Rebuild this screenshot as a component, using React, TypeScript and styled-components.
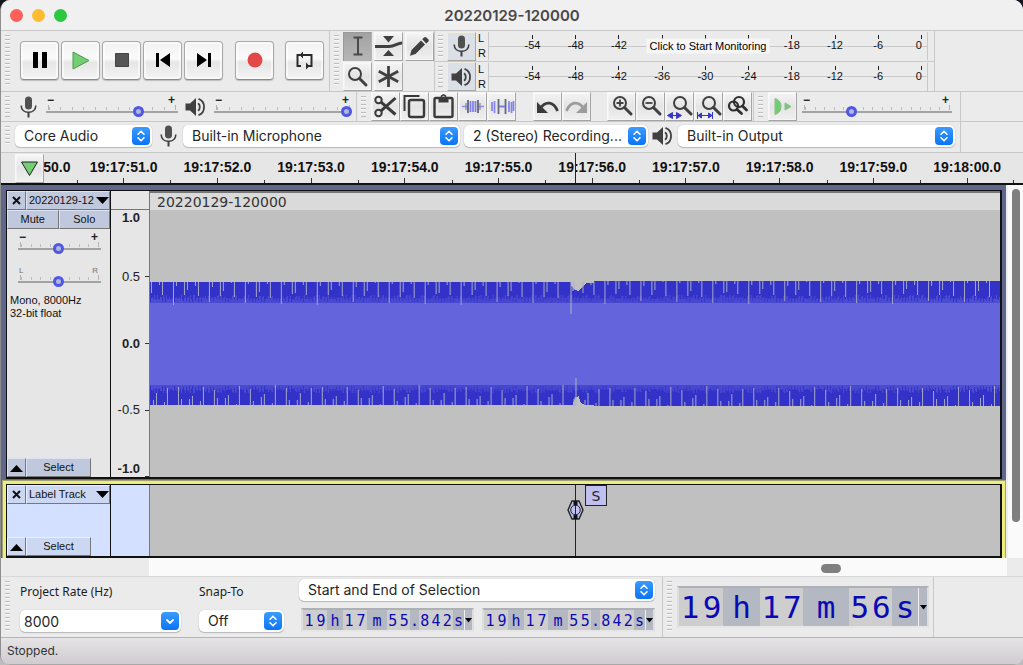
import React from "react";
import styled, { createGlobalStyle, css } from "styled-components";

const UI = `Inter, "Liberation Sans", sans-serif`;
const HELV = `"Liberation Sans", Arial, sans-serif`;
const LUCIDA = `"Noto Sans", "DejaVu Sans", sans-serif`;
const LINE = "#c8c8c8";
const INK = "#404040";

const Global = createGlobalStyle`
  *, *::before, *::after { box-sizing: border-box; }
  html, body { margin: 0; padding: 0; min-height: 100%; }
  body { background: linear-gradient(#16161e 0 30px, #bdbdbd 30px); font-family: ${UI}; color: #262626; }
  button, input, select { font: inherit; color: inherit; margin: 0; padding: 0; border: 0; background: none; border-radius: 0; }
  svg { display: block; flex: none; }
`;

/* ---------- window frame ---------- */

const Window = styled.div`
  min-height: 100vh;
  display: flex;
  flex-direction: column;
  background: #ebebeb;
  border-left: 1px solid #8e8e8e;
  border-radius: 10px;
  overflow: hidden;
`;

const TitleBar = styled.header`
  position: relative;
  height: 31px;
  display: flex;
  align-items: center;
  justify-content: center;
  background: #f0f0f0;
  border-bottom: 1px solid ${LINE};
`;

const Lights = styled.div`
  position: absolute;
  left: 9px;
  display: flex;
  gap: 9px;
`;

const Light = styled.button<{ $c: string }>`
  && {
    width: 13px;
    height: 13px;
    border-radius: 50%;
    background: ${(p) => p.$c};
  }
`;

const Title = styled.h1`
  margin: 0;
  font-size: 15px;
  font-weight: 600;
  color: #484848;
`;

const ToolRow = styled.div<{ $h: number }>`
  display: flex;
  height: ${(p) => p.$h}px;
  border-bottom: 1px solid ${LINE};
`;

const Bar = styled.div<{ $w: number; $gap?: number; $lift?: boolean }>`
  display: flex;
  align-items: center;
  gap: ${(p) => p.$gap ?? 0}px;
  flex: 0 1 ${(p) => p.$w}px;
  padding-left: 4px;
  padding-bottom: ${(p) => (p.$lift ? 2 : 0)}px;
  border-right: 1px solid ${LINE};
`;

const Grip = styled.span`
  flex: none;
  align-self: stretch;
  width: 5px;
  margin: 4px 0;
  background: repeating-linear-gradient(#bcbcbc 0 1px, #f8f8f8 1px 2px, transparent 2px 4px);
`;

const Gap = styled.span<{ $w: number }>`
  flex: none;
  width: ${(p) => p.$w}px;
`;

/* ---------- buttons ---------- */

const TransportButton = styled.button`
  flex: none;
  display: grid;
  place-items: center;
  width: 39px;
  height: 39px;
  border: 1px solid #a8a8a8;
  border-bottom-color: #8a8a8a;
  border-radius: 4px;
  background: linear-gradient(#f2f2f2, #fafafa 45%, #e6e6e6 55%, #f4f4f4);
  box-shadow: inset 0 0 0 2px #ffffff88, 0 1px 1px #0003;
`;

const ToolButton = styled.button<{ $down?: boolean; $tint?: boolean }>`
  flex: none;
  display: grid;
  place-items: center;
  width: 29px;
  height: 29px;
  border: 1px solid #f8f8f8;
  border-right-color: #a4a4a4;
  border-bottom-color: #a4a4a4;
  background: linear-gradient(#f4f4f4, #e4e4e4 50%, #f0f0f0);
  box-shadow: inset 0 0 0 1px #ffffff66;
  ${(p) =>
    p.$down &&
    css`
      border-color: #9a9a9a #b4b4b4 #b4b4b4 #9a9a9a;
      background: linear-gradient(#a2a2a2, #b6b6b6);
      box-shadow: none;
    `}
  ${(p) =>
    p.$tint &&
    css`
      border-color: #f2eedf #a8a8a8 #a8a8a8 #f2eedf;
      background: #dbdfe6;
      box-shadow: none;
    `}
`;

const ToolGrid = styled.div`
  display: grid;
  grid-template-columns: repeat(3, 29px);
  gap: 1px 2px;
`;

/* ---------- sliders ---------- */

const SliderBox = styled.label<{ $w: number }>`
  flex: none;
  width: ${(p) => p.$w}px;
  display: flex;
  flex-direction: column;
`;

const Ends = styled.span<{ $small?: boolean }>`
  display: flex;
  justify-content: space-between;
  height: 9px;
  padding: 0 3px 0 1px;
  font: ${(p) => (p.$small ? "8px" : "bold 12px")} / 9px ${HELV};
  color: ${(p) => (p.$small ? "#707070" : "#222")};
`;

const Ticks = styled.span<{ $n: number }>`
  height: 5px;
  margin: 0 2px;
  border: solid #b4b4b4;
  border-width: 0 1px;
  background: repeating-linear-gradient(to right, #bcbcbc 0 1px, transparent 1px calc(100% / ${(p) => p.$n})) bottom / 100% 3px no-repeat;
`;

const Range = styled.input`
  && {
    appearance: none;
    display: block;
    width: 100%;
    height: 11px;
    margin-top: -4px;
    background: linear-gradient(#a2a2a2, #a2a2a2) center / 100% 2px no-repeat;
  }
  &::-webkit-slider-thumb {
    appearance: none;
    width: 11px;
    height: 11px;
    border: 3px solid #4f57e6;
    border-radius: 50%;
    background: #b4b4dc;
  }
`;

function Slider(p: { label: string; w: number; n: number; value: number; ends?: [string, string] }) {
  const ends = p.ends ?? ["−", "+"];
  return (
    <SliderBox $w={p.w}>
      <Ends $small={!!p.ends} aria-hidden="true">
        <span>{ends[0]}</span>
        <span>{ends[1]}</span>
      </Ends>
      <Ticks $n={p.n} />
      <Range type="range" min={0} max={100} defaultValue={p.value} aria-label={p.label} />
    </SliderBox>
  );
}

/* ---------- drop-downs ---------- */

const Field = styled.span<{ $w?: number }>`
  position: relative;
  flex: none;
  width: ${(p) => (p.$w ? `${p.$w}px` : "100%")};
  display: block;
  height: 22px;
  border-radius: 5px;
  background: #fff;
  box-shadow: 0 1px 1px #0003, 0 0 1px #0004;
`;

const Select = styled.select`
  && {
    appearance: none;
    display: block;
    width: 100%;
    height: 22px;
    padding: 0 24px 0 9px;
    font-size: 14px;
    line-height: 20px;
    text-overflow: ellipsis;
  }
`;

const Text = styled.input`
  && {
    display: block;
    width: 100%;
    height: 22px;
    padding: 1px 24px 0 4px;
    font-size: 14px;
  }
`;

const Knob = styled.span`
  position: absolute;
  right: 2px;
  top: 2px;
  width: 18px;
  height: 18px;
  border-radius: 4px;
  background: linear-gradient(#3b9bff, #0a74f5);
  pointer-events: none;
`;

function UpDown() {
  return (
    <Knob>
      <svg width="18" height="18" viewBox="0 0 18 18" fill="none" stroke="#fff" strokeWidth="1.6" strokeLinecap="round" strokeLinejoin="round">
        <path d="M6 7.2 9 4.2l3 3M6 10.8l3 3 3-3" />
      </svg>
    </Knob>
  );
}

function Dropdown(p: { label: string; w: number; value: string }) {
  return (
    <Field $w={p.w}>
      <Select aria-label={p.label}>
        <option>{p.value}</option>
      </Select>
      <UpDown />
    </Field>
  );
}

/* ---------- icons ---------- */

const Mic = () => (
  <svg width="17" height="22" viewBox="0 0 17 22" fill="none" stroke={INK}>
    <rect x="5" y="0.5" width="7" height="13" rx="3.5" fill="#505050" stroke="none" />
    <path d="M1.200 9.500c0 4.200 3 6.800 7.300 6.800s7.300-2.600 7.300-6.800" strokeWidth="1.600" />
    <path d="M8.500 16v5.500" strokeWidth="2" />
  </svg>
);

const Speaker = () => (
  <svg width="21" height="20" viewBox="0 0 21 20" fill="none" stroke={INK}>
    <path d="M0.500 6.500h4.500L11 1v18l-6-5.500H0.500z" fill={INK} stroke="none" />
    <path d="M13 6.200c2.400 1.600 2.400 6 0 7.600" strokeWidth="1.800" />
    <path d="M13.500 1.800c7.400 2.600 7.400 13.800 0 16.400" strokeWidth="1.800" />
  </svg>
);

const Glass = ({ children, x = 10, y = 9 }: { children?: React.ReactNode; x?: number; y?: number }) => (
  <svg width="27" height="27" viewBox="0 0 27 27" fill="none" stroke={INK}>
    <circle cx={x} cy={y} r="6" strokeWidth="2" />
    <path d={`M${x + 4.5} ${y + 4.5}l6.500 6.500`} strokeWidth="3" strokeLinecap="round" />
    {children}
  </svg>
);

const IBeam = () => (
  <svg width="12" height="20" viewBox="0 0 12 20" fill="none" stroke="#4a4a4a" strokeWidth="2">
    <path d="M1.500 1.500h9M1.500 18.500h9M6 1.500v17" />
  </svg>
);

const Envelope = () => (
  <svg width="27" height="27" viewBox="0 0 27 27" fill={INK}>
    <path d="M8 3h11l-5.500 6.500zM8 23h11l-5.500-6z" />
    <path d="M0 13.500h14c6 0 8-3.500 13-3.500" fill="none" stroke={INK} strokeWidth="2.800" />
  </svg>
);

const Pencil = () => (
  <svg width="21" height="21" viewBox="0 0 21 21" fill={INK}>
    <path d="M2.500 14 12 4.500l4 4L6.500 18l-5.500 1.800zM13.200 3.300 15 1.500c.8-.8 1.600-.8 2.400 0l1.800 1.800c.8.8.8 1.600 0 2.400L17.300 7.400z" />
  </svg>
);

const Star = () => (
  <svg width="23" height="23" viewBox="0 0 23 23" stroke={INK} strokeWidth="2.800">
    <path d="M11.500 1v21M1.800 6.200l19.400 10.600M1.800 16.800 21.200 6.200" />
  </svg>
);

const Scissors = () => (
  <svg width="25" height="25" viewBox="0 0 25 25" fill="none" stroke="#3a3a3a">
    <circle cx="5.500" cy="6" r="3.200" strokeWidth="2" />
    <circle cx="5.500" cy="19" r="3.200" strokeWidth="2" />
    <path d="M8 8.200 22.500 20.500M8 16.800 22.500 4" strokeWidth="3" />
  </svg>
);

const Copy = () => (
  <svg width="25" height="25" viewBox="0 0 25 25" fill="none" stroke="#3a3a3a" strokeWidth="2.400">
    <path d="M2.500 17V2h15" strokeWidth="2" />
    <rect x="7" y="6" width="15" height="17" rx="2" />
  </svg>
);

const Paste = () => (
  <svg width="25" height="25" viewBox="0 0 25 25" fill="none" stroke="#3a3a3a" strokeWidth="2.400">
    <rect x="3.500" y="4" width="18" height="19" rx="1.500" />
    <path d="M7.500 3h10v5.500h-10z" fill="#3a3a3a" stroke="none" />
    <circle cx="12.500" cy="3" r="2" strokeWidth="1.600" />
  </svg>
);

const Trim = () => (
  <svg width="27" height="27" viewBox="0 0 27 27" fill="none">
    <path d="M3 13.500h6M19 13.500h6" stroke="#8d8df0" strokeWidth="1.700" />
    <path d="M11.500 8v11M14 8v11M16.500 8v11" stroke="#7d7dec" strokeWidth="1.700" />
    <path d="M9 7v13M19 7v13" stroke="#66667c" strokeWidth="1.800" />
    <path d="M7 10v7M21 10v7" stroke="#9090b0" strokeWidth="1.400" />
  </svg>
);

const Silence = () => (
  <svg width="27" height="27" viewBox="0 0 27 27" fill="none">
    <path d="M4 9v9M6.500 8v12M21 8v11M23.500 9v11M25.500 8v10" stroke="#8484ec" strokeWidth="1.700" />
    <path d="M10.500 6v15M17.500 6v15" stroke="#66667c" strokeWidth="1.800" />
    <path d="M11 13.500h6" stroke="#7d7dec" strokeWidth="2" />
  </svg>
);

const Undo = ({ flip, color }: { flip?: boolean; color: string }) => (
  <svg width="25" height="20" viewBox="0 0 25 20" fill="none" stroke={color}>
    <g transform={flip ? "translate(25 0) scale(-1 1)" : undefined}>
      <path d="M5 11.500C11 3 19 5 22.500 14" strokeWidth="2.800" />
      <path d="M2 5v11h11z" fill={color} stroke="none" />
    </g>
  </svg>
);

const Loop = () => (
  <svg width="21" height="21" viewBox="0 0 21 21" fill="none" stroke="#2a2a2a" strokeWidth="2">
    <path d="M6.500 5H3.500v11H7" />
    <path d="M9 5h8.500v7M13 16h4.500V9" />
    <path d="M9 1.500v7L5.500 5zM12 12.500v7l3.500-3.500z" fill="#2a2a2a" stroke="none" />
  </svg>
);

const EditIcons: [string, React.ReactNode][] = [
  ["Cut", <Scissors />],
  ["Copy", <Copy />],
  ["Paste", <Paste />],
  ["Trim audio", <Trim />],
  ["Silence audio", <Silence />],
];

const ZoomIcons: [string, React.ReactNode][] = [
  ["Zoom in", <Glass x={12} y={10}><path d="M8.500 10h7M12 6.500v7" strokeWidth="1.800" /></Glass>],
  ["Zoom out", <Glass x={12} y={10}><path d="M8.500 10h7" strokeWidth="1.800" /></Glass>],
  ["Fit selection", <Glass x={14} y={10}><path d="M2 22.500h13M6.500 19.500v6l-5-3zM10.500 19.500v6l5-3z" stroke="#3636c4" fill="#3636c4" strokeWidth="1" /></Glass>],
  ["Fit project", <Glass x={14} y={10}><path d="M2.500 19v7M17.500 19v7M3 22.500h14M6.500 20v5l-3.500-2.500zM13.500 20v5l3.500-2.500z" stroke="#3636c4" fill="#3636c4" strokeWidth="1" /></Glass>],
  ["Zoom toggle", (
    <svg width="27" height="27" viewBox="0 0 27 27" fill="none" stroke="#2e2e2e" strokeWidth="2.200" strokeLinecap="round">
      <circle cx="15" cy="9" r="5" />
      <circle cx="9.500" cy="13" r="4.500" />
      <path d="m18.500 13 4 4M13 16.500l4.500 4" strokeWidth="2.800" />
    </svg>
  )],
];

/* ---------- meters ---------- */

const Meters = styled(Bar)`
  flex-direction: column;
  align-items: stretch;
  padding: 0;
`;

const MeterRow = styled.div`
  display: flex;
  align-items: center;
  height: 30px;
  padding: 0 6px 0 3px;
  & + & { border-top: 1px solid ${LINE}; }
`;

const Channels = styled.span`
  display: flex;
  flex-direction: column;
  width: 10px;
  margin-left: 2px;
  font: 11px / 15px ${HELV};
  color: #111;
`;

const Meter = styled.div`
  position: relative;
  flex: 1;
  height: 28px;
  padding: 3px 5px 0 43px;
  border: solid ${LINE};
  border-width: 0 1px 0 1px;
  background: linear-gradient(${LINE}, ${LINE}) center / 100% 1px no-repeat;
`;

const Scale = styled.div`
  display: flex;
  justify-content: space-between;
`;

const Mark = styled.span`
  display: flex;
  flex-direction: column;
  align-items: center;
  width: 1px;
  font: 11px / 12px ${HELV};
  color: #111;
  white-space: nowrap;
  &::before { content: ""; width: 1px; height: 4px; background: #222; }
  &:last-child { align-items: flex-end; }
`;

const Monitor = styled.button`
  && {
    position: absolute;
    left: 50%;
    top: 50%;
    transform: translate(-50%, -50%);
    height: 15px;
    padding: 0 3px;
    background: #f6f6f6;
    font: 11px / 15px ${HELV};
    color: #000;
    white-space: nowrap;
  }
`;

const DB = ["-54", "-48", "-42", "-36", "-30", "-24", "-18", "-12", "-6", "0"];

function MeterLine(p: { label: string; icon: React.ReactNode; monitor?: boolean }) {
  return (
    <MeterRow>
      <Grip />
      <Gap $w={4} />
      <ToolButton $tint aria-label={p.label}>{p.icon}</ToolButton>
      <Channels><span>L</span><span>R</span></Channels>
      <Meter>
        <Scale>
          {DB.map((d, i) => (
            <Mark key={d}>{p.monitor && i > 2 && i < 6 ? null : d}</Mark>
          ))}
        </Scale>
        {p.monitor && <Monitor>Click to Start Monitoring</Monitor>}
      </Meter>
    </MeterRow>
  );
}

/* ---------- timeline ---------- */

const Timeline = styled.div`
  position: relative;
  display: flex;
  height: 32px;
  overflow: hidden;
  background: #e6e6e6;
  border-bottom: 2px solid #111;
`;

const Hours = styled.div`
  flex: 1;
  display: grid;
  grid-template-columns: repeat(11, 1fr);
  margin: 0 9px 0 -18px;
  background: linear-gradient(#333, #333) right bottom / 1px 3px no-repeat;
`;

const Hour = styled.span`
  min-width: 0;
  padding-top: 5px;
  text-align: center;
  white-space: nowrap;
  font: bold 14px / 18px ${HELV};
  color: #111;
  background:
    linear-gradient(#333, #333) left bottom / 1px 3px no-repeat,
    linear-gradient(#333, #333) center bottom / 1px 5px no-repeat;
  &:first-child { padding-left: 54px; }
`;

const PinButton = styled(ToolButton)`
  position: absolute;
  left: 14px;
  top: 1px;
`;

const PlayCursor = styled.span`
  position: absolute;
  left: 56.2%;
  top: 0;
  bottom: 0;
  width: 1px;
  background: #222;
`;

/* ---------- tracks ---------- */

const TrackArea = styled.main`
  flex: 1;
  display: flex;
  background: #fafafa;
`;

const Tracks = styled.div`
  flex: 1;
  display: flex;
  flex-direction: column;
  min-width: 0;
  background: #5f678a;
`;

const Track = styled.section<{ $focus?: boolean }>`
  display: flex;
  margin: 5px 4px 0 5px;
  border: 1px solid #111;
  border-width: 1px 2px 2px 1px;
  background: #e6e6e6;
  ${(p) =>
    p.$focus &&
    css`
      flex: 1;
      margin: 1px 0 0 1px;
      border: 0;
      padding: 4px 4px 0 4px;
      background: #eded7c;
      box-shadow: inset 0 1px #a0a07a, inset 1px 0 #a0a07a, inset -1px 0 #a0a07a;
    `}
`;

const Inner = styled.div`
  flex: 1;
  display: flex;
  min-height: 74px;
  min-width: 0;
  border: 1px solid #111;
  border-width: 1px 2px 2px 1px;
  background: #d4e0ff;
`;

const Panel = styled.div`
  flex: none;
  width: 104px;
  display: flex;
  flex-direction: column;
  border-right: 1px solid #111;
  font: 11px / 13px ${HELV};
  color: #111;
`;

const PanelRow = styled.div`
  display: flex;
  flex: none;
`;

const PanelButton = styled.button<{ $w?: number; $blue?: boolean }>`
  && {
    ${(p) => (p.$w ? `flex: none; width: ${p.$w}px;` : "flex: 1;")}
    height: 19px;
    display: flex;
    align-items: center;
    justify-content: center;
    white-space: nowrap;
    border: 1px solid ${(p) => (p.$blue ? "#e8f0ff" : "#dbe3f2")};
    border-right-color: #777;
    border-bottom-color: #777;
    background: ${(p) => (p.$blue ? "#ccd8f2" : "#bfc8dc")};
  }
`;

const NameButton = styled(PanelButton)`
  &&& {
    justify-content: space-between;
    padding: 0 0 0 2px;
  }
`;

const PanelSliders = styled.div`
  display: flex;
  flex-direction: column;
  gap: 12px;
  padding: 4px 9px 0 11px;
`;

const Info = styled.p`
  margin: 7px 0 0 3px;
`;

const Push = styled.span`
  flex: 1;
`;

const VRuler = styled.div`
  flex: none;
  width: 39px;
  display: flex;
  flex-direction: column;
  border-right: 1px solid #777;
  font: 13px / 14px ${HELV};
  color: #222;
`;

const VHead = styled.span`
  height: 19px;
  border-bottom: 1px solid #777;
`;

const VScale = styled.div`
  flex: 1;
  display: grid;
  grid-template-rows: 1fr 2fr 2fr 2fr 1fr;
  align-items: center;
`;

const VMark = styled.span<{ $bold?: boolean }>`
  padding-right: 9px;
  text-align: right;
  font-weight: ${(p) => (p.$bold ? "bold" : "normal")};
  background: linear-gradient(#333, #333) right center / 4px 1px no-repeat;
  &:first-child { align-self: start; padding-top: 1px; background: none; }
  &:last-child { align-self: end; padding-bottom: 1px; background-position: right bottom; }
`;

const Clip = styled.div`
  flex: 1;
  min-width: 0;
  position: relative;
  display: flex;
  flex-direction: column;
  background: #c0c0c0;
`;

const ClipTitle = styled.div`
  height: 19px;
  padding-left: 7px;
  border-top: 2px solid #767676;
  background: #dadada;
  font: 14px / 18px "DejaVu Sans", sans-serif;
  color: #333;
`;

const LabelCursor = styled.span`
  position: absolute;
  left: 50%;
  top: 0;
  bottom: 0;
  width: 1px;
  background: #222;
`;

const Handle = styled.span`
  position: absolute;
  left: 50%;
  top: 15px;
  margin-left: -8px;
`;

const LabelTag = styled.button`
  && {
    position: absolute;
    left: 50%;
    top: 0;
    margin-left: 10px;
    width: 22px;
    height: 21px;
    border: 1px solid #222;
    background: #bfc0f0;
    font: 14px / 18px "DejaVu Sans", sans-serif;
  }
`;

const VScroll = styled.div`
  flex: none;
  width: 17px;
  padding: 4px 3px 36px 4px;
  border-left: 2px solid #ededf2;
  display: flex;
`;

const Thumb = styled.span<{ $w?: number; $h?: number }>`
  width: ${(p) => (p.$w ? `${p.$w}px` : "100%")};
  height: ${(p) => (p.$h ? `${p.$h}px` : "auto")};
  border-radius: 5px;
  background: #7f7f7f;
`;

const HScroll = styled.div`
  display: flex;
  align-items: center;
  justify-content: flex-end;
  height: 18px;
  margin: 0 16px 0 148px;
  padding: 2px 166px 0 0;
  background: #fafafa;
`;

const W = 851;
const H = 267;

function toothPath(edge: number, dir: 1 | -1) {
  let d = "";
  for (let x = 0; x < W; x += 1) {
    const seed = (x * 7919 + (x % 11) * 331 + (x % 7) * 97) % 13;
    const len = x % 3 === 0 ? 1 + (seed % 4) : 4 + (seed % 5);
    d += `M${x + 0.5} ${edge}v${-dir * len}`;
  }
  return d;
}

function gapPath(marks: [number, number][], start: number, from: (x: number) => number, dir: 1 | -1) {
  let d = "";
  for (let base = start - 36; base < W; base += 36) {
    marks.forEach(([dx, len], i) => {
      const x = base + dx;
      if (x < 0 || x >= W || (x > 418 && x < 432)) return;
      const wobble = Math.abs(Math.floor(base / 36) * 5 + i * 3) % 4;
      d += `M${x + 0.5} ${from(x)}v${dir * (len + wobble - 1)}`;
    });
  }
  return d;
}

const topEdge = (x: number) => (x > 445 ? 71 : 72);
const bottomEdge = (x: number) => (x > 445 ? 196 : 195);

function Waveform() {
  return (
    <svg width="100%" height={H} viewBox={`0 0 ${W} ${H}`} preserveAspectRatio="none" shapeRendering="crispEdges">
      <path d={`M0 72H421v3l4 4 4 2 5-5 3-3h8v-2H${W}V196H445v-1h-10l-4-3-2-6-3 2-3 6v1H0z`} fill="#3232c8" />
      <path d={`M0 93H${W}V175H0z`} fill="#6464dc" />
      <path d={toothPath(93, 1)} stroke="#4e4ed2" />
      <path d={toothPath(175, -1)} stroke="#4e4ed2" />
      <path d={gapPath([[0, 14], [11, 21], [14, 3], [22, 13], [25, 9], [33, 2]], 12, topEdge, 1)} stroke="#a8a8c8" />
      <path d={gapPath([[0, 18], [11, 16], [14, 5], [22, 6], [25, 10], [33, 2]], 17, bottomEdge, -1)} stroke="#a8a8c8" />
      <path d="M421.500 72v32M423.500 72v9M424.500 72v8M426.500 196v-28M425.500 196v-9M424.500 196v-7" stroke="#b4b4c4" />
    </svg>
  );
}

const Caret = ({ up }: { up?: boolean }) => (
  <svg width="13" height="8" viewBox="0 0 13 8">
    <path d={up ? "M0 8h13L6.500 1z" : "M0 0h13L6.500 7z"} fill="#000" />
  </svg>
);

const Close = () => (
  <svg width="9" height="9" viewBox="0 0 9 9" stroke="#111" strokeWidth="2">
    <path d="M1 1l7 7M8 1 1 8" />
  </svg>
);

/* ---------- selection bar ---------- */

const SelectionRow = styled.footer`
  display: flex;
  height: 62px;
  border-top: 1px solid #d8d8d8;
  border-bottom: 1px solid #b4b4b4;
`;

const Column = styled.div<{ $w: number }>`
  flex: 0 1 ${(p) => p.$w}px;
  align-self: flex-start;
  display: flex;
  flex-direction: column;
  justify-content: space-between;
  height: 55px;
  padding-top: 2px;
`;

const Caption = styled.label`
  padding-top: 4px;
  font: 12px / 18px ${LUCIDA};
  color: #1c1c1c;
  white-space: nowrap;
`;

const Times = styled.div`
  display: flex;
  justify-content: space-between;
  padding-left: 2px;
`;

const TimeBox = styled.div<{ $big?: boolean }>`
  flex: none;
  display: flex;
  height: ${(p) => (p.$big ? 42 : 24)}px;
  border: 2px solid #dedede;
  border-top-color: #aeb0b8;
  border-bottom-color: #e6e6e6;
  background: #b4b8c2;
  font: ${(p) => (p.$big ? "31px / 38px" : "15px / 22px")} "DejaVu Sans Mono", monospace;
  color: #0a0ab4;
`;

const Digits = styled.span<{ $w: number; $unit?: boolean }>`
  width: ${(p) => p.$w}px;
  display: flex;
  justify-content: space-around;
  background: ${(p) => (p.$unit ? "#b4b8c2" : "#cecece")};
`;

const TimeMenu = styled.button<{ $w: number }>`
  && {
    width: ${(p) => p.$w}px;
    display: grid;
    place-items: center;
    border-left: 1px solid #f0f0f0;
  }
`;

type Part = [string, number, boolean?];
const SMALL: Part[] = [["19", 24], ["h", 16, true], ["17", 24], ["m", 20, true], ["55", 23], [".", 9, true], ["842", 34], ["s", 11, true]];
const BIG: Part[] = [["19", 44], ["h", 37, true], ["17", 43], ["m", 46, true], ["56", 43], ["s", 26, true]];

function Time(p: { label: string; parts: Part[]; big?: boolean }) {
  return (
    <TimeBox $big={p.big} role="group" aria-label={p.label}>
      {p.parts.map(([t, w, unit], i) => (
        <Digits key={i} $w={w} $unit={unit}>
          {t.split("").map((c, k) => <span key={k}>{c}</span>)}
        </Digits>
      ))}
      <TimeMenu $w={p.big ? 9 : 8} aria-label={`${p.label} format`}>
        <svg width="7" height="5" viewBox="0 0 7 5"><path d="M0 0h7L3.500 4.500z" /></svg>
      </TimeMenu>
    </TimeBox>
  );
}

const Status = styled.div`
  height: 27px;
  padding: 0 6px;
  background: linear-gradient(#e6e4e6, #cfccd0);
  border-bottom: 1px solid #a8a8a8;
  font-size: 12px;
  line-height: 26px;
  color: #333;
`;

const HOURS = ["50.0", "19:17:51.0", "19:17:52.0", "19:17:53.0", "19:17:54.0", "19:17:55.0", "19:17:56.0", "19:17:57.0", "19:17:58.0", "19:17:59.0", "19:18:00.0"];

export default function App() {
  return (
    <Window>
      <Global />
      <TitleBar>
        <Lights>
          <Light $c="#fe5f57" aria-label="Close" />
          <Light $c="#febc2e" aria-label="Minimize" />
          <Light $c="#28c840" aria-label="Zoom" />
        </Lights>
        <Title>20220129-120000</Title>
      </TitleBar>

      <ToolRow $h={61}>
        <Bar $w={329} $gap={2} $lift>
          <Grip />
          <Gap $w={6} />
          <TransportButton aria-label="Pause">
            <svg width="14" height="16" viewBox="0 0 14 16"><path d="M0 0h5v16H0zM9 0h5v16H9z" /></svg>
          </TransportButton>
          <TransportButton aria-label="Play">
            <svg width="18" height="19" viewBox="0 0 18 19"><path d="M1 1v17l16-8.500z" fill="#74cf74" stroke="#4c9a4c" /></svg>
          </TransportButton>
          <TransportButton aria-label="Stop">
            <svg width="14" height="14" viewBox="0 0 14 14"><path d="M.5.5h13v13H.5z" fill="#555" stroke="#444" /></svg>
          </TransportButton>
          <TransportButton aria-label="Skip to start">
            <svg width="14" height="14" viewBox="0 0 14 14"><path d="M0 0h3v14H0zM14 0v14L4 7z" /></svg>
          </TransportButton>
          <TransportButton aria-label="Skip to end">
            <svg width="14" height="14" viewBox="0 0 14 14"><path d="M11 0h3v14h-3zM0 0v14l10-7z" /></svg>
          </TransportButton>
          <Gap $w={8} />
          <TransportButton aria-label="Record">
            <svg width="16" height="16" viewBox="0 0 16 16"><circle cx="8" cy="8" r="7.500" fill="#e34848" /></svg>
          </TransportButton>
          <Gap $w={7} />
          <TransportButton aria-label="Loop"><Loop /></TransportButton>
        </Bar>
        <Bar $w={103} $gap={4}>
          <Grip />
          <ToolGrid>
            <ToolButton $down aria-label="Selection tool"><IBeam /></ToolButton>
            <ToolButton aria-label="Envelope tool"><Envelope /></ToolButton>
            <ToolButton aria-label="Draw tool"><Pencil /></ToolButton>
            <ToolButton aria-label="Zoom tool"><Glass x={11} y={11} /></ToolButton>
            <ToolButton aria-label="Multi-tool"><Star /></ToolButton>
          </ToolGrid>
        </Bar>
        <Meters $w={500}>
          <MeterLine label="Record meter" icon={<Mic />} monitor />
          <MeterLine label="Playback meter" icon={<Speaker />} />
        </Meters>
      </ToolRow>

      <ToolRow $h={30}>
        <Bar $w={356}>
          <Grip />
          <Gap $w={10} />
          <Mic />
          <Gap $w={9} />
          <Slider label="Recording volume" w={132} n={11} value={72} />
          <Gap $w={7} />
          <Speaker />
          <Gap $w={8} />
          <Slider label="Playback volume" w={138} n={11} value={100} />
        </Bar>
        <Bar $w={397}>
          <Grip />
          <Gap $w={5} />
          {EditIcons.map(([n, i]) => <ToolButton key={n} aria-label={n}>{i}</ToolButton>)}
          <Gap $w={17} />
          <ToolButton aria-label="Undo"><Undo color="#3a3a3a" /></ToolButton>
          <ToolButton aria-label="Redo"><Undo flip color="#9c9c9c" /></ToolButton>
          <Gap $w={16} />
          {ZoomIcons.map(([n, i]) => <ToolButton key={n} aria-label={n}>{i}</ToolButton>)}
        </Bar>
        <Bar $w={207}>
          <Grip />
          <Gap $w={5} />
          <ToolButton aria-label="Play at speed">
            <svg width="19" height="17" viewBox="0 0 19 17" fill="#6fcf6f" stroke="#8fb98f">
              <path d="M2 .5v16c5-1.500 6-5 6-8s-1-6.500-6-8zM12 5v7l6-3.500z" />
            </svg>
          </ToolButton>
          <Gap $w={5} />
          <Slider label="Playback speed" w={150} n={15} value={32} />
        </Bar>
      </ToolRow>

      <ToolRow $h={31}>
        <Bar $w={960} $lift>
          <Grip />
          <Gap $w={5} />
          <Dropdown label="Audio host" w={137} value="Core Audio" />
          <Gap $w={8} />
          <Mic />
          <Gap $w={6} />
          <Dropdown label="Recording device" w={277} value="Built-in Microphone" />
          <Gap $w={4} />
          <Dropdown label="Recording channels" w={184} value="2 (Stereo) Recording..." />
          <Gap $w={4} />
          <Speaker />
          <Gap $w={5} />
          <Dropdown label="Playback device" w={277} value="Built-in Output" />
        </Bar>
      </ToolRow>

      <Timeline>
        <Hours>{HOURS.map((h) => <Hour key={h}>{h}</Hour>)}</Hours>
        <PlayCursor />
        <PinButton aria-label="Pinned play head">
          <svg width="19" height="16" viewBox="0 0 19 16"><path d="M1.500 1h16l-8 13.500z" fill="#74cf74" stroke="#222" /></svg>
        </PinButton>
      </Timeline>

      <TrackArea>
        <Tracks>
          <Track>
            <Panel>
              <PanelRow>
                <PanelButton $w={19} aria-label="Close track"><Close /></PanelButton>
                <NameButton>20220129-12<Caret /></NameButton>
              </PanelRow>
              <PanelRow>
                <PanelButton>Mute</PanelButton>
                <PanelButton>Solo</PanelButton>
              </PanelRow>
              <PanelSliders>
                <Slider label="Gain" w={83} n={8} value={48} />
                <Slider label="Pan" w={83} n={8} value={48} ends={["L", "R"]} />
              </PanelSliders>
              <Info>Mono, 8000Hz<br />32-bit float</Info>
              <Push />
              <PanelRow>
                <PanelButton $w={19} aria-label="Collapse track"><Caret up /></PanelButton>
                <PanelButton $w={65}>Select</PanelButton>
              </PanelRow>
            </Panel>
            <VRuler>
              <VHead />
              <VScale>
                <VMark $bold>1.0</VMark>
                <VMark>0.5</VMark>
                <VMark $bold>0.0</VMark>
                <VMark>-0.5</VMark>
                <VMark $bold>-1.0</VMark>
              </VScale>
            </VRuler>
            <Clip>
              <ClipTitle>20220129-120000</ClipTitle>
              <Waveform />
            </Clip>
          </Track>
          <Track $focus>
            <Inner>
              <Panel>
                <PanelRow>
                  <PanelButton $blue $w={19} aria-label="Close track"><Close /></PanelButton>
                  <NameButton $blue>Label Track<Caret /></NameButton>
                </PanelRow>
                <Push />
                <PanelRow>
                  <PanelButton $blue $w={19} aria-label="Collapse track"><Caret up /></PanelButton>
                  <PanelButton $blue $w={65}>Select</PanelButton>
                </PanelRow>
              </Panel>
              <VRuler />
              <Clip>
                <LabelCursor />
                <Handle>
                  <svg width="17" height="20" viewBox="0 0 17 20" fill="#bfc0f0" stroke="#222">
                    <path d="M5 1h7l4 9-4 9H5l-4-9z" strokeWidth="1.400" />
                    <path d="M6.500 1h4v4h-4zM6.500 15h4v4h-4z" fill="#111" stroke="none" />
                    <circle cx="8.500" cy="10" r="4.800" />
                    <path d="M8.500 5v10" />
                  </svg>
                </Handle>
                <LabelTag>S</LabelTag>
              </Clip>
            </Inner>
          </Track>
        </Tracks>
        <VScroll><Thumb /></VScroll>
      </TrackArea>
      <HScroll><Thumb $w={20} $h={9} /></HScroll>

      <SelectionRow>
        <Bar $w={662}>
          <Grip />
          <Gap $w={10} />
          <Column $w={161}>
            <Caption htmlFor="rate">Project Rate (Hz)</Caption>
            <Field>
              <Text id="rate" defaultValue="8000" />
              <Knob>
                <svg width="18" height="18" viewBox="0 0 18 18" fill="none" stroke="#fff" strokeWidth="1.800" strokeLinecap="round" strokeLinejoin="round">
                  <path d="M6 8l3 3 3-3" />
                </svg>
              </Knob>
            </Field>
          </Column>
          <Gap $w={18} />
          <Column $w={85}>
            <Caption htmlFor="snap">Snap-To</Caption>
            <Field>
              <Select id="snap"><option>Off</option></Select>
              <UpDown />
            </Field>
          </Column>
          <Gap $w={15} />
          <Column $w={356}>
            <Field>
              <Select aria-label="Selection mode"><option>Start and End of Selection</option></Select>
              <UpDown />
            </Field>
            <Times>
              <Time label="Selection start" parts={SMALL} />
              <Time label="Selection end" parts={SMALL} />
            </Times>
          </Column>
        </Bar>
        <Bar $w={271} $gap={5}>
          <Grip />
          <Time label="Audio position" parts={BIG} big />
        </Bar>
      </SelectionRow>
      <Status role="status">Stopped.</Status>
    </Window>
  );
}
